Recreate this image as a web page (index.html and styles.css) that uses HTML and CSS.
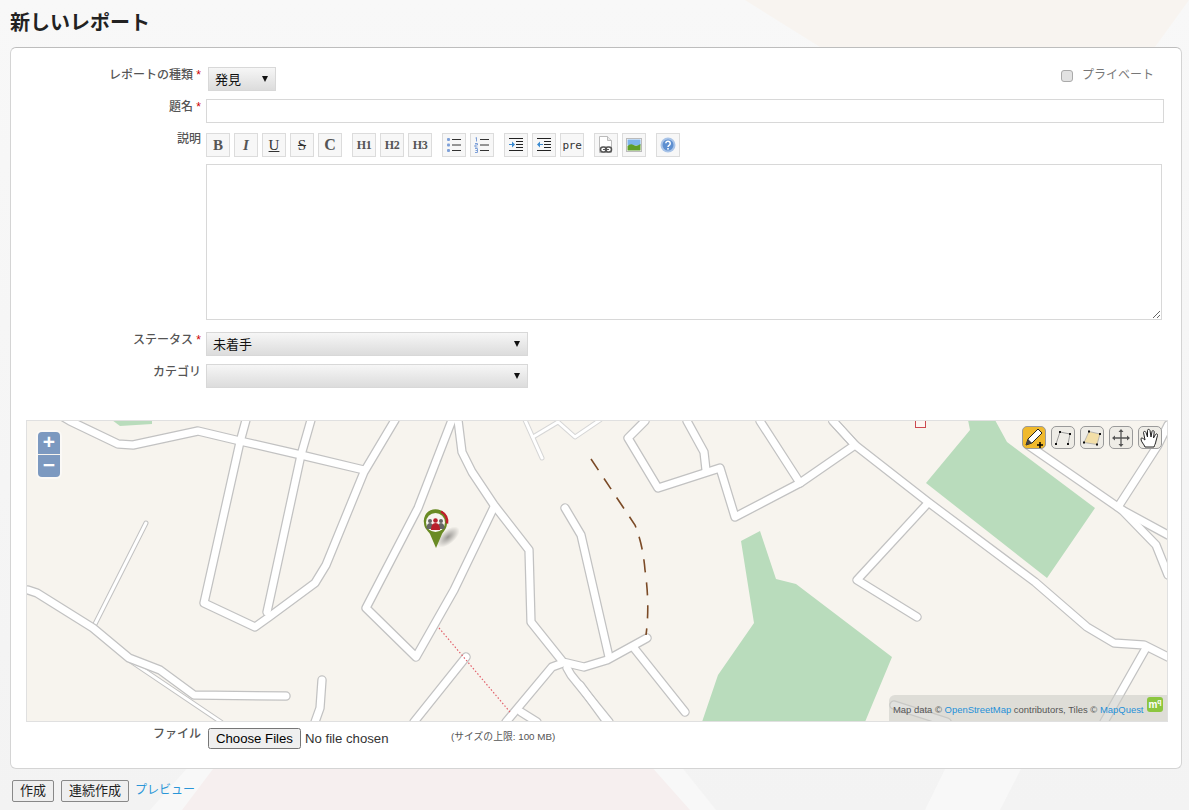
FILE: index.html
```html
<!DOCTYPE html>
<html lang="ja">
<head>
<meta charset="utf-8">
<title>新しいレポート</title>
<link rel="stylesheet" href="styles.css">
</head>
<body>
<svg class="backdrop" viewBox="0 0 1189 810" aria-hidden="true">
  <defs>
    <linearGradient id="bdgrad" x1="0" y1="0" x2="0" y2="1"><stop offset="0" stop-color="#f8f8f8"/><stop offset="1" stop-color="#f3f3f3"/></linearGradient>
  </defs>
  <rect width="1189" height="810" fill="url(#bdgrad)"/>
  <polygon class="bd-cream" points="745,0 1189,0 1155,47 820,47"/>
  <polygon class="bd-light" points="150,810 190,765 680,765 716,810"/>
  <polygon class="bd-pink" points="182,810 216,765 650,765 690,810"/>
  <polygon class="bd-light" points="925,810 947,765 1023,765 1000,810"/>
</svg>
<main class="page">
  <h2 class="title">新しいレポート</h2>
  <form class="panel">
    <div class="row row-type">
      <label class="lbl">レポートの種類<span class="req"> *</span></label>
      <select class="sel sel-type"><option>発見</option></select>
      <label class="private"><input type="checkbox" class="chk"><span>プライベート</span></label>
    </div>
    <div class="row row-subject">
      <label class="lbl">題名<span class="req"> *</span></label>
      <input type="text" class="txt">
    </div>
    <div class="row row-tools">
      <label class="lbl lbl-up">説明</label>
      <div class="toolbar">
        <div class="tgroup">
          <button type="button" class="tb tb-b">B</button>
          <button type="button" class="tb tb-i">I</button>
          <button type="button" class="tb tb-u">U</button>
          <button type="button" class="tb tb-s">S</button>
          <button type="button" class="tb tb-c">C</button>
        </div>
        <div class="tgroup">
          <button type="button" class="tb tb-h">H1</button>
          <button type="button" class="tb tb-h">H2</button>
          <button type="button" class="tb tb-h">H3</button>
        </div>
        <div class="tgroup">
          <button type="button" class="tb"><svg width="16" height="16" viewBox="0 0 16 16"><g fill="#7ea0d8"><rect x="1" y="1" width="3" height="3" rx="1"/><rect x="1" y="6.500" width="3" height="3" rx="1"/><rect x="1" y="12" width="3" height="3" rx="1"/></g><path d="M6 2.500h9M6 8h9M6 13.500h9" stroke="#333" fill="none"/></svg></button>
          <button type="button" class="tb"><svg width="16" height="16" viewBox="0 0 16 16"><g stroke="#7ea0d8" fill="none"><path d="M1.500 1l1-.5v4M1 6.500h2.500v1.500h-2.500v2h2.500M1 11.500h2.500v4h-2.500M1.500 13.500h2"/></g><path d="M6 2.500h9M6 8h9M6 13.500h9" stroke="#333" fill="none"/></svg></button>
        </div>
        <div class="tgroup">
          <button type="button" class="tb"><svg width="16" height="16" viewBox="0 0 16 16"><path d="M1 1.500h14M8 4.500h7M8 7.500h7M8 10.500h7M1 13.500h14" stroke="#222" fill="none"/><path d="M1 7h3V4.500l3 3-3 3V8H1z" fill="#3a8ad0"/></svg></button>
          <button type="button" class="tb"><svg width="16" height="16" viewBox="0 0 16 16"><path d="M1 1.500h14M8 4.500h7M8 7.500h7M8 10.500h7M1 13.500h14" stroke="#222" fill="none"/><path d="M7 7H4V4.500l-3 3 3 3V8h3z" fill="#3a8ad0"/></svg></button>
          <button type="button" class="tb tb-pre">pre</button>
        </div>
        <div class="tgroup">
          <button type="button" class="tb"><svg width="18" height="20" viewBox="0 0 18 20"><path d="M2.500 1.500h8l4 4v12h-12z" fill="#fff" stroke="#bbb"/><path d="M10.500 1.500v4h4" fill="#e8e8e8" stroke="#bbb"/><rect x="3.500" y="12" width="6" height="5" rx="2.500" fill="none" stroke="#555" stroke-width="1.500"/><rect x="8.500" y="12" width="6" height="5" rx="2.500" fill="none" stroke="#555" stroke-width="1.500"/><path d="M6 14.500h6" stroke="#555"/></svg></button>
          <button type="button" class="tb"><svg width="16" height="14" viewBox="0 0 16 14"><rect x=".5" y=".5" width="15" height="13" fill="#fff" stroke="#bbb"/><rect x="1.500" y="1.500" width="13" height="6" fill="#7eb4ec"/><path d="M1.500 8q3-3 6-1t7-1v6.500h-13z" fill="#5f9e2a"/></svg></button>
        </div>
        <div class="tgroup">
          <button type="button" class="tb"><svg width="16" height="16" viewBox="0 0 16 16"><circle cx="8" cy="8" r="7.500" fill="#a9c4e8"/><circle cx="8" cy="8" r="5.500" fill="#5d8fd0"/><path d="M5.800 6.300a2.200 2.200 0 1 1 3.300 2C8.300 8.800 8 9 8 10" fill="none" stroke="#fff" stroke-width="1.500"/><rect x="7.200" y="11" width="1.600" height="1.600" fill="#fff"/></svg></button>
        </div>
      </div>
    </div>
    <div class="row row-desc">
      <span class="lbl"></span>
      <textarea class="area"></textarea>
    </div>
    <div class="row row-status">
      <label class="lbl">ステータス<span class="req"> *</span></label>
      <select class="sel sel-wide"><option>未着手</option></select>
    </div>
    <div class="row row-cat">
      <label class="lbl">カテゴリ</label>
      <select class="sel sel-wide"><option></option></select>
    </div>
    <div class="map">
      <svg class="map-svg" viewBox="27 421 1140 300" aria-hidden="true">
        <defs>
          <radialGradient id="pinshadow"><stop offset="0" stop-color="#000" stop-opacity=".38"/><stop offset="1" stop-color="#000" stop-opacity="0"/></radialGradient>
        </defs>
        <g class="park">
          <polygon points="112,420 120,426 152,424 152,420"/>
          <polygon points="968,420 970,430 926,483 1047,578 1095,508 1007,442 995,420"/>
          <polygon points="760,531 741,541 754,623 718,675 702,722 865,722 892,657 796,584 776,579"/>
        </g>
        <g class="minor casing">
          <path d="M525 420L542 458"/><path d="M533 437L558 422 575 437 600 420"/>
        </g>
        <g class="minor fill-thin">
          <path d="M525 420L542 458"/><path d="M533 437L558 422 575 437 600 420"/>
        </g>
        <g class="thin casing">
          <path d="M146 523L93 628"/><path d="M129 660L221 722"/>
        </g>
        <g class="thin fill-thin">
          <path d="M146 523L93 628"/><path d="M129 660L221 722"/>
        </g>
        <g class="road casing">
          <path d="M60 415L70 421 118 444 133 445 198 431 240 441 301 455 364 470"/>
          <path d="M246 420L240 442 204 603 255 627 269 617 315 583 326 565 364 472 395 420"/>
          <path d="M311 420L301 455 267 612"/>
          <path d="M28 590L37 593 93 628 129 658 160 670 194 695 286 696"/>
          <path d="M322 680L320 708 315 722"/>
          <path d="M452 420L418 508 366 608 416 657 454 590 494 507"/>
          <path d="M458 420L462 452 472 472 494 505 529 550 531 622 563 662 584 667 607 660 647 638"/>
          <path d="M565 508L581 535 609 657"/>
          <path d="M466 657L414 722"/>
          <path d="M563 663L552 667 506 722"/>
          <path d="M567 668L571 675 609 722"/>
          <path d="M521 712L537 722"/>
          <path d="M645 421L628 438 658 488 720 468 735 517 800 483 855 445 833 421"/>
          <path d="M687 421L704 452 706 470"/>
          <path d="M760 421L800 483"/>
          <path d="M833 421L855 445 928 502 1035 582 1087 627 1114 643 1144 645 1168 657"/>
          <path d="M928 503L857 580 917 617"/>
          <path d="M1028 445L1122 510 1156 545 1168 575"/>
          <path d="M1122 510L1168 535"/>
          <path d="M1118 507L1158 445 1168 425"/>
          <path d="M1146 648L1104 722"/>
          <path d="M634 648L685 712"/>
          <path d="M580 685L607 722"/>
          <path d="M894 705L947 722"/>
        </g>
        <g class="road fill-road">
          <path d="M60 415L70 421 118 444 133 445 198 431 240 441 301 455 364 470"/>
          <path d="M246 420L240 442 204 603 255 627 269 617 315 583 326 565 364 472 395 420"/>
          <path d="M311 420L301 455 267 612"/>
          <path d="M28 590L37 593 93 628 129 658 160 670 194 695 286 696"/>
          <path d="M322 680L320 708 315 722"/>
          <path d="M452 420L418 508 366 608 416 657 454 590 494 507"/>
          <path d="M458 420L462 452 472 472 494 505 529 550 531 622 563 662 584 667 607 660 647 638"/>
          <path d="M565 508L581 535 609 657"/>
          <path d="M466 657L414 722"/>
          <path d="M563 663L552 667 506 722"/>
          <path d="M567 668L571 675 609 722"/>
          <path d="M521 712L537 722"/>
          <path d="M645 421L628 438 658 488 720 468 735 517 800 483 855 445 833 421"/>
          <path d="M687 421L704 452 706 470"/>
          <path d="M760 421L800 483"/>
          <path d="M833 421L855 445 928 502 1035 582 1087 627 1114 643 1144 645 1168 657"/>
          <path d="M928 503L857 580 917 617"/>
          <path d="M1028 445L1122 510 1156 545 1168 575"/>
          <path d="M1122 510L1168 535"/>
          <path d="M1118 507L1158 445 1168 425"/>
          <path d="M1146 648L1104 722"/>
          <path d="M634 648L685 712"/>
          <path d="M580 685L607 722"/>
          <path d="M894 705L947 722"/>
        </g>
        <path class="track" d="M591 459Q615 495 635 525Q643 545 645 570Q650 605 646 635"/>
        <path class="footway" d="M439 628L510 712"/>
        <rect class="poi" x="915.500" y="416" width="10" height="11.500"/>
        <ellipse cx="448" cy="537" rx="14" ry="7" transform="rotate(-40 448 537)" fill="url(#pinshadow)"/>
        <path d="M424 523a11.700 11.700 0 1 1 23 0c0 5-3 8-5 11l-6 14-6-14c-2-3-6-6-6-11z" fill="#6a8b24"/>
        <circle cx="435.500" cy="522.500" r="9.500" fill="#f7f5f0"/>
        <path d="M441 511.500a12 12 0 0 1 6 12" stroke="#c01f2c" stroke-width="2.500" fill="none"/>
        <g fill="#666"><circle cx="430" cy="521" r="2"/><path d="M426.500 529q0-6 3.500-6t3.500 6z"/><circle cx="441" cy="521" r="2"/><path d="M437.500 529q0-6 3.500-6t3.500 6z"/></g>
        <g fill="#b8202c"><circle cx="435.500" cy="520.500" r="2.300"/><path d="M431 530q0-7 4.500-7t4.500 7z"/></g>
      </svg>
      <div class="zoom">
        <span class="zoom-b">+</span>
        <span class="zoom-b zoom-minus">−</span>
      </div>
      <div class="drawtools">
        <span class="dt dt-on"><svg width="22" height="22" viewBox="0 0 22 22"><path d="M3 18l2-6L15 2l4 4L9 16z" fill="#fff" stroke="#222"/><path d="M3 18l2-6 4 4z" fill="#444"/><path d="M14 18h6M17 15v6" stroke="#000" stroke-width="1.500"/></svg></span>
        <span class="dt"><svg width="22" height="22" viewBox="0 0 22 22"><path d="M4 17L8 5 18 7l-2 10" fill="none" stroke="#888" stroke-width=".8"/><g fill="#111"><rect x="3" y="16" width="2" height="2"/><rect x="7" y="4" width="2" height="2"/><rect x="17" y="6" width="2" height="2"/><rect x="15" y="16" width="2" height="2"/></g></svg></span>
        <span class="dt"><svg width="22" height="22" viewBox="0 0 22 22"><path d="M3 15.500L8 4.500 19 7l-3 10.500z" fill="#f3dfa8" stroke="#aaa" stroke-width=".8"/><g fill="#111"><rect x="2" y="14.500" width="2" height="2"/><rect x="7" y="3.500" width="2" height="2"/><rect x="18" y="6" width="2" height="2"/><rect x="15" y="16.500" width="2" height="2"/></g></svg></span>
        <span class="dt"><svg width="22" height="22" viewBox="0 0 22 22"><path d="M11 3v16M3 11h16" stroke="#555" stroke-width="1.300"/><path d="M11 2l-2.500 3h5zM11 20l-2.500-3h5zM2 11l3-2.500v5zM20 11l-3-2.500v5z" fill="#555"/></svg></span>
        <span class="dt"><svg width="22" height="22" viewBox="0 0 22 22"><path d="M6 20c-1-3-4-5-4-8 0-1.500 1.500-1.500 2.500 0L6 13 4.500 5.500c0-1.500 2-1.500 2.500 0L8.500 10 8.500 3.500c0-1.500 2-1.500 2.500 0L12 10l1-5.500c.3-1.500 2.300-1 2.200.5L14.500 11l2-3.500c.8-1.300 2.500-.5 2 1L17 14c-.5 3-1.500 4-2 6z" fill="#fff" stroke="#222" stroke-linejoin="round"/></svg></span>
      </div>
      <div class="attrib">Map data © <a href="#">OpenStreetMap</a> contributors, Tiles © <a href="#">MapQuest</a><span class="mq">m<sup>q</sup></span></div>
    </div>
    <div class="row row-file">
      <label class="lbl lbl-file">ファイル</label>
      <input type="file" multiple class="file">
      <span class="hint">(サイズの上限: 100 MB)</span>
    </div>
  </form>
  <div class="actions">
    <button type="button" class="btn">作成</button>
    <button type="button" class="btn">連続作成</button>
    <a href="#" class="preview">プレビュー</a>
  </div>
</main>
</body>
</html>
```
FILE: styles.css
```css
html, body {
  margin: 0;
  padding: 0;
  height: 810px;
  overflow: hidden;
}
body {
  background: #f3f3f3;
  font-family: "Liberation Sans", "Noto Sans CJK JP", sans-serif;
  color: #333;
  position: relative;
}
.backdrop {
  position: absolute;
  left: 0;
  top: 0;
  width: 1189px;
  height: 810px;
}
.bd-cream { fill: #f8f4f0; }
.bd-light { fill: #f8f8f8; }
.bd-pink { fill: #f6efef; }

.page {
  position: relative;
  padding: 0 7px 0 10px;
}
.title {
  margin: 0;
  height: 47px;
  box-sizing: border-box;
  padding-top: 9px;
  font-size: 20px;
  line-height: 29px;
  font-weight: 700;
  color: #222;
}
.panel {
  display: block;
  background: #fff;
  border: 1px solid #d4d4d4;
  border-top-color: #bdbdbd;
  border-radius: 6px;
  padding: 19px 0;
  height: 722px;
  box-sizing: border-box;
}
.row {
  display: flex;
  align-items: flex-start;
  gap: 5px;
}
.lbl {
  flex: 0 0 190px;
  text-align: right;
  font-size: 12px;
  line-height: 16px;
  font-weight: 500;
  color: #555;
}
.lbl-up { margin-top: -2px; }
.req { color: #c00; }

.row-type { height: 24px; margin-bottom: 8px; padding-right: 27px; }
.row-subject { height: 24px; margin-bottom: 10px; }
.row-tools { height: 24px; margin-bottom: 7px; }
.row-desc { height: 156px; margin-bottom: 12px; }
.row-status { height: 24px; margin-bottom: 8px; }
.row-cat { height: 24px; margin-bottom: 32px; }
.row-file { height: 22px; margin-top: 5px; }

.sel {
  appearance: none;
  height: 24px;
  box-sizing: border-box;
  border: 1px solid #d8d8d8;
  border-radius: 0;
  background-color: #e8e8e8;
  background-image:
    url("data:image/svg+xml,%3Csvg xmlns='http://www.w3.org/2000/svg' width='6' height='6'%3E%3Cpath d='M0 0h6L3 6z' fill='%23111'/%3E%3C/svg%3E"),
    linear-gradient(#f6f6f6, #dcdcdc);
  background-repeat: no-repeat;
  background-position: right 7px center, 0 0;
  font-family: inherit;
  font-size: 13px;
  color: #111;
  padding: 0 6px;
}
.sel-type { width: 68px; margin-left: 2px; }
.sel-wide { width: 322px; }

.private {
  margin-left: auto;
  display: flex;
  align-items: flex-start;
  gap: 9px;
  font-size: 12px;
  line-height: 16px;
  color: #777;
}
.chk {
  appearance: none;
  width: 12px;
  height: 12px;
  margin: 3px 0 0;
  background: #e2e2e2;
  border: 1px solid #aaa;
  border-radius: 3px;
  box-sizing: border-box;
}

.txt {
  width: 958px;
  height: 24px;
  box-sizing: border-box;
  margin: 0;
  border: 1px solid #d8d8d8;
  background: #fff;
}
.area {
  width: 956px;
  height: 156px;
  box-sizing: border-box;
  margin: 0;
  border: 1px solid #d8d8d8;
  background: #fff;
  display: block;
}

.toolbar { display: flex; gap: 10px; }
.tgroup { display: flex; gap: 4px; }
.tb {
  width: 24px;
  height: 24px;
  box-sizing: border-box;
  padding: 0;
  border: 1px solid #dcdcdc;
  background: #f7f7f7;
  color: #555;
  display: flex;
  align-items: center;
  justify-content: center;
  font-family: "Liberation Serif", serif;
  font-weight: 700;
  font-size: 15px;
  line-height: 1;
}
.tb-i { font-style: italic; }
.tb-u { font-weight: 400; text-decoration: underline; color: #333; }
.tb-s { font-weight: 400; text-decoration: line-through; color: #333; }
.tb-c { font-size: 16px; }
.tb-h { font-size: 12px; letter-spacing: -.5px; }
.tb-pre {
  font-family: "DejaVu Sans Mono", monospace;
  font-size: 11px;
  font-weight: 400;
  color: #333;
  letter-spacing: -.3px;
}

.map {
  position: relative;
  margin-left: 15px;
  width: 1142px;
  height: 302px;
  box-sizing: border-box;
  border: 1px solid #e0e0e0;
  background: #f7f4ee;
  overflow: hidden;
}
.map-svg { display: block; width: 1140px; height: 300px; }
.park polygon { fill: #b9dcbc; }
.casing path { stroke: #c2c2c2; fill: none; stroke-linecap: round; stroke-linejoin: round; }
.road.casing path { stroke-width: 9.500px; }
.fill-road path { stroke: #fff; stroke-width: 7px; fill: none; stroke-linecap: round; stroke-linejoin: round; }
.thin.casing path { stroke-width: 5px; }
.fill-thin path { stroke: #fff; stroke-width: 3px; fill: none; stroke-linecap: round; stroke-linejoin: round; }
.minor.casing path { stroke: #d6d6d6; stroke-width: 5px; }
.track { fill: none; stroke: #7b4a26; stroke-width: 1.600px; stroke-dasharray: 13 10; }
.footway { fill: none; stroke: #e2606a; stroke-width: 1.200px; stroke-dasharray: 1.500 2; }
.poi { fill: #fdf6f2; stroke: #cc4a50; stroke-width: 1; }

.zoom {
  position: absolute;
  left: 11px;
  top: 11px;
  width: 22px;
  display: flex;
  flex-direction: column;
  gap: 1px;
  box-shadow: 0 0 0 2px rgba(255,255,255,.45);
  border-radius: 4px;
}
.zoom-b {
  height: 22px;
  background: #7c99c0;
  color: #fff;
  border-radius: 4px 4px 0 0;
  font: 700 21px/20px "Liberation Sans", sans-serif;
  text-align: center;
}
.zoom-minus { border-radius: 0 0 4px 4px; }

.drawtools {
  position: absolute;
  top: 5px;
  right: 5px;
  display: flex;
  gap: 5px;
}
.dt {
  width: 24px;
  height: 23px;
  box-sizing: border-box;
  border: 1px solid #9a9a9a;
  border-radius: 5px;
  background: #eeece6;
  display: flex;
  align-items: center;
  justify-content: center;
}
.dt-on { background: #f0b92c; }

.attrib {
  position: absolute;
  right: 0;
  bottom: 0;
  width: 278px;
  height: 26px;
  box-sizing: border-box;
  padding: 8px 0 0 4px;
  background: rgba(205, 205, 200, .6);
  border-radius: 6px 0 0 0;
  font-size: 9.450px;
  line-height: 13px;
  color: #555;
  white-space: nowrap;
}
.attrib a { color: #1e90d8; text-decoration: none; }
.mq {
  position: absolute;
  right: 4px;
  top: 2px;
  width: 16px;
  height: 15px;
  border-radius: 3px;
  background: #8cc63f;
  color: #fff;
  font-weight: 700;
  font-size: 10px;
  line-height: 15px;
  text-align: center;
}
.mq sup { font-size: 7px; line-height: 0; }

.lbl-file { margin-top: -1px; }
.file {
  margin: 1px 0 0 2px;
  width: 232px;
  font-family: "Liberation Sans", sans-serif;
  font-size: 13.200px;
  color: #333;
}
.hint {
  margin-left: 6px;
  padding-top: 3px;
  font-size: 9.800px;
  line-height: 13px;
  color: #555;
}

.actions {
  display: flex;
  align-items: flex-start;
  gap: 7px;
  margin-top: 11px;
  padding-left: 2px;
}
.btn {
  height: 22px;
  box-sizing: border-box;
  padding: 0 7px;
  border: 1px solid #888;
  border-radius: 2px;
  background: #efefef;
  color: #222;
  font-family: inherit;
  font-size: 13px;
  line-height: 18px;
}
.preview {
  margin-left: -1px;
  padding-top: 1px;
  font-size: 12px;
  line-height: 18px;
  color: #2a96d8;
  text-decoration: none;
}
```
